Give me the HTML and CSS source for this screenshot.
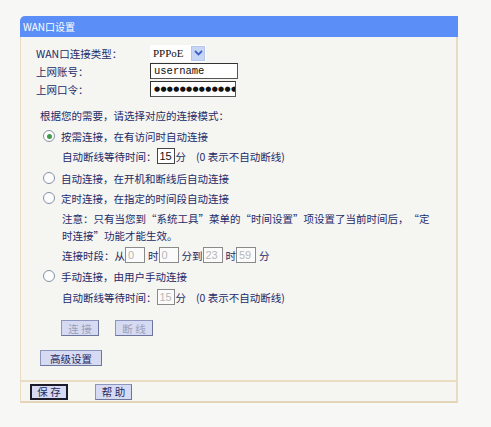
FILE: index.html
```html
<!DOCTYPE html>
<html lang="zh-CN">
<head>
<meta charset="utf-8">
<title>WAN口设置</title>
<link rel="stylesheet" href="styles.css">
</head>
<body>
<div class="panel">
  <div class="panel-head">WAN口设置</div>
  <div class="panel-body">
    <div class="fields">
      <div class="field"><span class="label">WAN口连接类型：</span>
        <span class="select"><span class="select-val">PPPoE</span><span class="select-btn"><svg width="9" height="6" viewBox="0 0 9 6"><path d="M1 1 L4.5 4.5 L8 1" fill="none" stroke="#3d63c8" stroke-width="1.8"/></svg></span></span>
      </div>
      <div class="field"><span class="label">上网账号：</span><span class="text-in user">username</span></div>
      <div class="field"><span class="label">上网口令：</span><span class="text-in pass">●●●●●●●●●●●●●</span></div>
    </div>
    <div class="intro">根据您的需要，请选择对应的连接模式：</div>
    <div class="radio-row"><span class="radio checked"></span><span>按需连接，在有访问时自动连接</span></div>
    <div class="sub-row">自动断线等待时间：<span class="box">15</span>分<span class="hint">(0 表示不自动断线)</span></div>
    <div class="radio-row r2"><span class="radio"></span><span>自动连接，在开机和断线后自动连接</span></div>
    <div class="radio-row"><span class="radio"></span><span>定时连接，在指定的时间段自动连接</span></div>
    <div class="note">注意：只有当您到“系统工具”菜单的“时间设置”项设置了当前时间后，“定<br>时连接”功能才能生效。</div>
    <div class="sub-row period">连接时段：从<span class="box dim">0</span>时<span class="box dim">0</span>分到<span class="box dim">23</span>时<span class="box dim">59</span>分</div>
    <div class="radio-row r4"><span class="radio"></span><span>手动连接，由用户手动连接</span></div>
    <div class="sub-row wait2">自动断线等待时间：<span class="box dim">15</span>分<span class="hint">(0 表示不自动断线)</span></div>
    <div class="btn-row">
      <span class="btn disabled">连 接</span>
      <span class="btn disabled">断 线</span>
    </div>
    <div class="adv-row"><span class="btn adv">高级设置</span></div>
  </div>
  <div class="panel-foot">
    <span class="btn save">保 存</span>
    <span class="btn help">帮 助</span>
  </div>
</div>
</body>
</html>
```
FILE: styles.css
```css
* { box-sizing: border-box; }
body {
  margin: 0;
  background: #f7f7f5;
  font-family: "Noto Sans CJK SC", "Liberation Sans", sans-serif;
  font-size: 10.5px;
  color: #1d2b68;
  text-spacing-trim: space-all;
}
.panel {
  margin: 16px 0 0 20px;
  width: 438px;
}
.panel-head {
  height: 21px;
  line-height: 21px;
  background: #5b8ef6;
  color: #fff;
  padding-left: 3px;
  border-radius: 5px 0 0 0;
  font-size: 10px;
}
.panel-body {
  height: 343px;
  background: #f5f5f2;
  border-left: 1px solid #eadcc2;
  border-right: 2px solid #eadcc2;
  padding-top: 7px;
}
.fields { padding-left: 15px; }
.field {
  display: flex;
  align-items: center;
  height: 18px;
}
.label { width: 114px; }
.select {
  display: flex;
  align-items: center;
  width: 56px;
  height: 17px;
  background: #fff;
  padding-left: 3px;
}
.select-val {
  flex: 1;
  font-family: "Liberation Serif", serif;
  font-size: 11px;
  color: #111;
}
.select-btn {
  width: 14px;
  height: 15px;
  background: #c7d6f5;
  border: 1px solid #b4c6ee;
  display: flex;
  align-items: center;
  justify-content: center;
  margin-right: 1px;
}
.text-in {
  height: 16px;
  background: #fff;
  border: 1px solid #555;
  border-left-color: #333;
  border-top-color: #333;
  padding-left: 3px;
  color: #111;
  display: flex;
  align-items: center;
}
.user { width: 88px; font-family: "Liberation Mono", monospace; font-size: 10.5px; }
.pass { width: 86px; font-family: "DejaVu Sans", sans-serif; font-size: 7px; letter-spacing: 0.3px; overflow: hidden; }
.intro {
  margin-top: 8px;
  height: 20px;
  line-height: 20px;
  padding-left: 19px;
}
.radio-row {
  display: flex;
  align-items: center;
  height: 20px;
  padding-left: 22px;
  gap: 6px;
}
.radio-row.r2 { margin-top: 2px; }
.radio-row.r4 { margin-top: 1px; }
.radio {
  width: 12px;
  height: 12px;
  border-radius: 50%;
  border: 1px solid #8592a6;
  background: #fdfdfd;
  display: flex;
  align-items: center;
  justify-content: center;
}
.radio.checked::after {
  content: "";
  width: 5px;
  height: 5px;
  border-radius: 50%;
  background: #3f9a4a;
}
.sub-row {
  display: flex;
  align-items: center;
  height: 20px;
  padding-left: 41px;
}
.sub-row.period { margin-top: 1px; }
.sub-row.wait2 { margin-top: 1px; }
.box {
  display: inline-block;
  width: 18px;
  height: 16px;
  line-height: 14px;
  border: 1px solid #444;
  background: #fff;
  padding-left: 2px;
  color: #111;
  font-family: "Liberation Sans", sans-serif;
  font-size: 11px;
  margin-right: 1px;
}
.box.dim { color: #b7b7b7; border-color: #8a8a8a; background: #fbfbfb; }
.period .box { width: 20px; margin: 0 3px 0 0; }
.hint { margin-left: 10px; }
.note {
  margin-top: 2px;
  padding-left: 41px;
  line-height: 17px;
}
.btn-row {
  display: flex;
  gap: 16px;
  padding-left: 40px;
  margin-top: 13px;
}
.btn {
  display: inline-flex;
  align-items: center;
  justify-content: center;
  height: 16px;
  background: #d6daf2;
  border: 1px solid #8c95bb;
  border-right-color: #6c759c;
  border-bottom-color: #6c759c;
  color: #1e2a60;
  white-space: pre;
}
.btn.disabled { width: 38px; color: #9aa0b8; }
.adv-row { padding-left: 19px; margin-top: 14px; }
.btn.adv { width: 62px; }
.panel-foot {
  height: 23px;
  background: #f5f5f2;
  border-top: 2px solid #eadcc2;
  border-bottom: 2px solid #e4d4b8;
  border-left: 1px solid #eadcc2;
  border-right: 2px solid #eadcc2;
  display: flex;
  align-items: center;
  padding-left: 9px;
  gap: 27px;
}
.btn.save { width: 38px; border: 2px solid #1b1b2a; }
.btn.help { width: 37px; }
```
